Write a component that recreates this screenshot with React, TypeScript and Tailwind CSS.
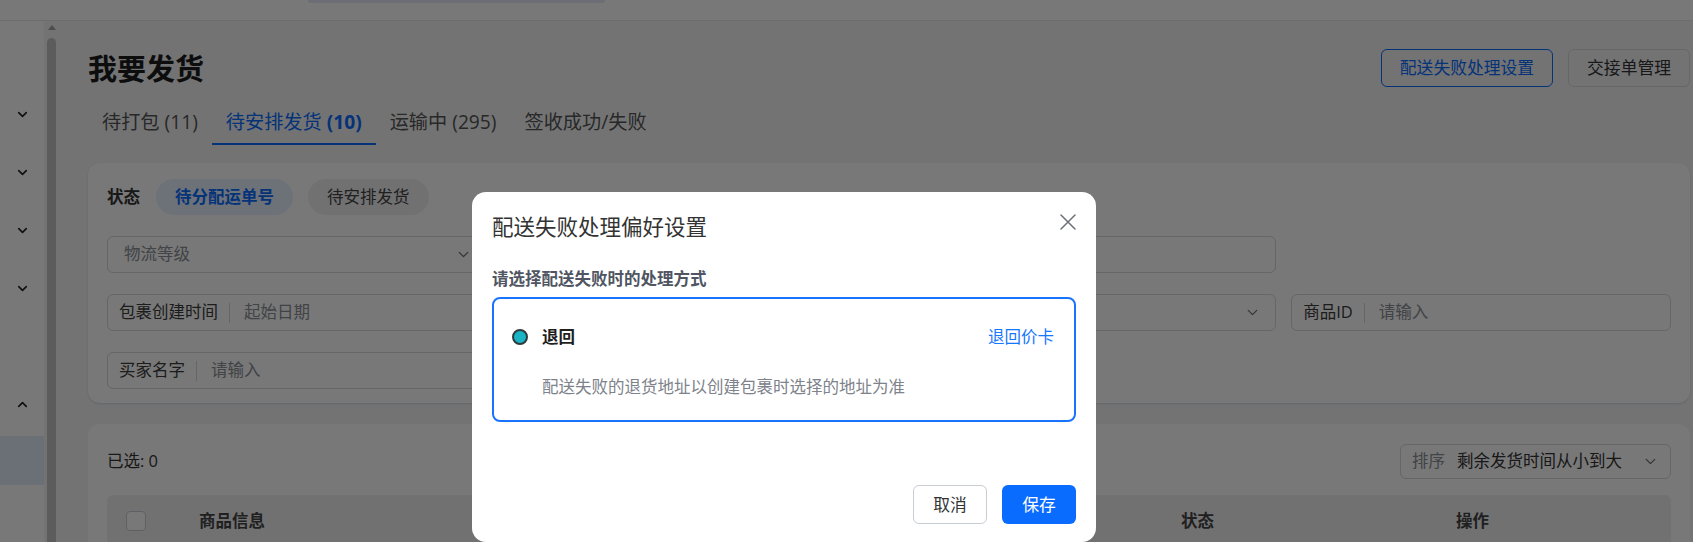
import { ChevronDown, ChevronUp } from "lucide-react";

const FONT = "font-['Open_Sans','Noto_Sans_CJK_SC',sans-serif]";

interface FieldProps {
  label?: string;
  placeholder?: string;
  select?: boolean;
  className?: string;
}

function Field({ label, placeholder, select, className = "" }: FieldProps) {
  return (
    <div
      className={`flex h-[37px] items-center rounded-md border border-[#d5d8de] bg-white pr-[14px] ${
        label ? "pl-[11px]" : "pl-[16px]"
      } ${className}`}
    >
      {label && (
        <>
          <span className="text-[#3d3d3d]">{label}</span>
          <span className="ml-[11px] mr-[14px] h-[20px] w-px bg-[#d5d8de]" />
        </>
      )}
      <span className="flex-1 text-[#8a8e96]">{placeholder}</span>
      {select && <ChevronDown size={17} strokeWidth={1.8} className="text-[#6b6f76]" />}
    </div>
  );
}

function Sidebar() {
  const items = ["down", "down", "down", "down", "none", "up"];
  return (
    <div className="flex w-[44px] flex-col bg-white pt-[64px]">
      {items.map((kind, i) => (
        <div key={i} className="flex h-[58px] items-center justify-center">
          {kind === "down" && <ChevronDown size={15} strokeWidth={2.6} className="text-[#222]" />}
          {kind === "up" && <ChevronUp size={15} strokeWidth={2.6} className="text-[#222]" />}
        </div>
      ))}
      <div className="mt-[3px] h-[49px] bg-[#e4ecfb]" />
    </div>
  );
}

export default function App() {
  return (
    <div className={`relative h-[542px] w-[1693px] overflow-hidden bg-[#f4f5f7] text-[16.5px] ${FONT}`}>
      {/* top bar */}
      <div className="h-[21px] border-b border-[#e6e7ea] bg-white">
        <div className="ml-[308px] h-[3px] w-[297px] rounded-b-sm bg-[#e3e9f6]" />
      </div>

      <div className="flex">
        <Sidebar />

        {/* scrollbar */}
        <div className="flex w-[16px] flex-col items-start pl-[3px]">
          <div className="mt-[4px] ml-[1px] h-0 w-0 border-x-[4px] border-b-[5px] border-x-transparent border-b-[#a3a3a3]" />
          <div className="mt-[8px] h-[520px] w-[9px] rounded-full bg-[#c4c4c4]" />
        </div>

        {/* main */}
        <div className="flex-1 pl-[28px] pr-[3px]">
          <div className="mt-[28px] flex h-[38px] items-center justify-between">
            <h1 className="mt-[2px] text-[29px] font-bold leading-[38px] text-[#1c1c1c]">我要发货</h1>
            <div className="flex gap-[15px]">
              <button className="h-[38px] rounded-md border border-[#0a6cff] px-[18px] text-[16.8px] text-[#0a6cff]">
                配送失败处理设置
              </button>
              <button className="h-[38px] rounded-md border border-[#d5d8de] px-[18px] text-[16.8px] text-[#333]">
                交接单管理
              </button>
            </div>
          </div>

          <div className="mt-[14px] flex text-[19.2px]">
            <div className="flex h-[44px] items-center border-b-2 border-transparent px-[14px] text-[#555]">待打包 (11)</div>
            <div className="flex h-[44px] items-center border-b-2 border-[#0a6cff] px-[14px] text-[#0a6cff]">
              待安排发货&nbsp;<span className="font-bold">(10)</span>
            </div>
            <div className="flex h-[44px] items-center border-b-2 border-transparent px-[14px] text-[#555]">运输中 (295)</div>
            <div className="flex h-[44px] items-center border-b-2 border-transparent px-[14px] text-[#555]">签收成功/失败</div>
          </div>

          {/* filter card */}
          <div className="mt-[18px] rounded-xl bg-white px-[19px] pb-[14px] pt-[15px] shadow-sm">
            <div className="flex h-[38px] items-center">
              <span className="mr-[16px] font-bold text-[#333]">状态</span>
              <span className="flex h-[36px] items-center rounded-full bg-[#e8f0fe] px-[19px] font-bold text-[#0a6cff]">待分配运单号</span>
              <span className="ml-[15px] flex h-[36px] items-center rounded-full bg-[#f0f1f3] px-[19px] text-[#444]">待安排发货</span>
            </div>
            <div className="mt-[20px] grid grid-cols-4 gap-x-[15px] gap-y-[21px]">
              <Field placeholder="物流等级" select />
              <Field className="col-span-2" label="运单号" placeholder="请输入" />
              <div />
              <Field className="col-span-2" label="包裹创建时间" placeholder="起始日期" />
              <Field placeholder="配送方式" select />
              <Field label="商品ID" placeholder="请输入" />
              <Field label="买家名字" placeholder="请输入" />
            </div>
          </div>

          {/* table card */}
          <div className="mt-[21px] h-[200px] rounded-xl bg-white px-[19px] pt-[20px]">
            <div className="flex h-[35px] items-center justify-between">
              <span className="text-[#333]">已选: 0</span>
              <div className="flex h-[35px] w-[271px] items-center rounded-md border border-[#d5d8de] px-[11px]">
                <span className="text-[#8a8e96]">排序</span>
                <span className="ml-[12px] flex-1 text-[#333]">剩余发货时间从小到大</span>
                <ChevronDown size={17} strokeWidth={1.8} className="text-[#6b6f76]" />
              </div>
            </div>
            <div className="mt-[16px] flex h-[52px] items-center rounded-t-md bg-[#f0f1f3] px-[19px] font-bold text-[#444]">
              <span className="h-[20px] w-[20px] rounded-[4px] border border-[#c9ccd2] bg-white" />
              <span className="ml-[53px]">商品信息</span>
              <span className="flex-1" />
              <span className="w-[275px]">状态</span>
              <span className="w-[196px]">操作</span>
            </div>
          </div>
        </div>
      </div>

      {/* overlay */}
      <div className="absolute inset-0 bg-black/[0.53]" />

      {/* modal */}
      <div className="absolute left-[472px] top-[192px] h-[350px] w-[624px] rounded-[14px] bg-white px-[20px] pt-[20px]">
        <div className="flex h-[30px] items-start justify-between">
          <h2 className="text-[21.5px] leading-[30px] text-[#333]">配送失败处理偏好设置</h2>
          <button className="mt-[2px]" aria-label="关闭">
            <svg width="16" height="16" viewBox="0 0 16 16" fill="none" stroke="#6b7079" strokeWidth="1.5" strokeLinecap="round">
              <path d="M1 1L15 15M15 1L1 15" />
            </svg>
          </button>
        </div>
        <div className="mt-[25px] font-bold leading-[24px] text-[#4f5562]">请选择配送失败时的处理方式</div>
        <div className="mt-[6px] h-[125px] rounded-lg border-2 border-[#1a73ff] pl-[18px] pr-[20px] pt-[26px]">
          <div className="flex h-[24px] items-center">
            <span className="h-[16px] w-[16px] rounded-full border-[2.5px] border-[#2e3a3e] bg-[#18b4c6]" />
            <span className="ml-[14px] font-bold text-[#1f1f1f]">退回</span>
            <span className="flex-1" />
            <span className="text-[#1677ff]">退回价卡</span>
          </div>
          <div className="ml-[30px] mt-[26px] leading-[24px] text-[#7d828b]">配送失败的退货地址以创建包裹时选择的地址为准</div>
        </div>
        <div className="mt-[63px] flex justify-end gap-[15px]">
          <button className="h-[39px] w-[74px] rounded-md border border-[#c8ccd3] text-[16.8px] text-[#333]">取消</button>
          <button className="h-[39px] w-[74px] rounded-md bg-[#0a6cff] text-[16.8px] text-white">保存</button>
        </div>
      </div>
    </div>
  );
}
